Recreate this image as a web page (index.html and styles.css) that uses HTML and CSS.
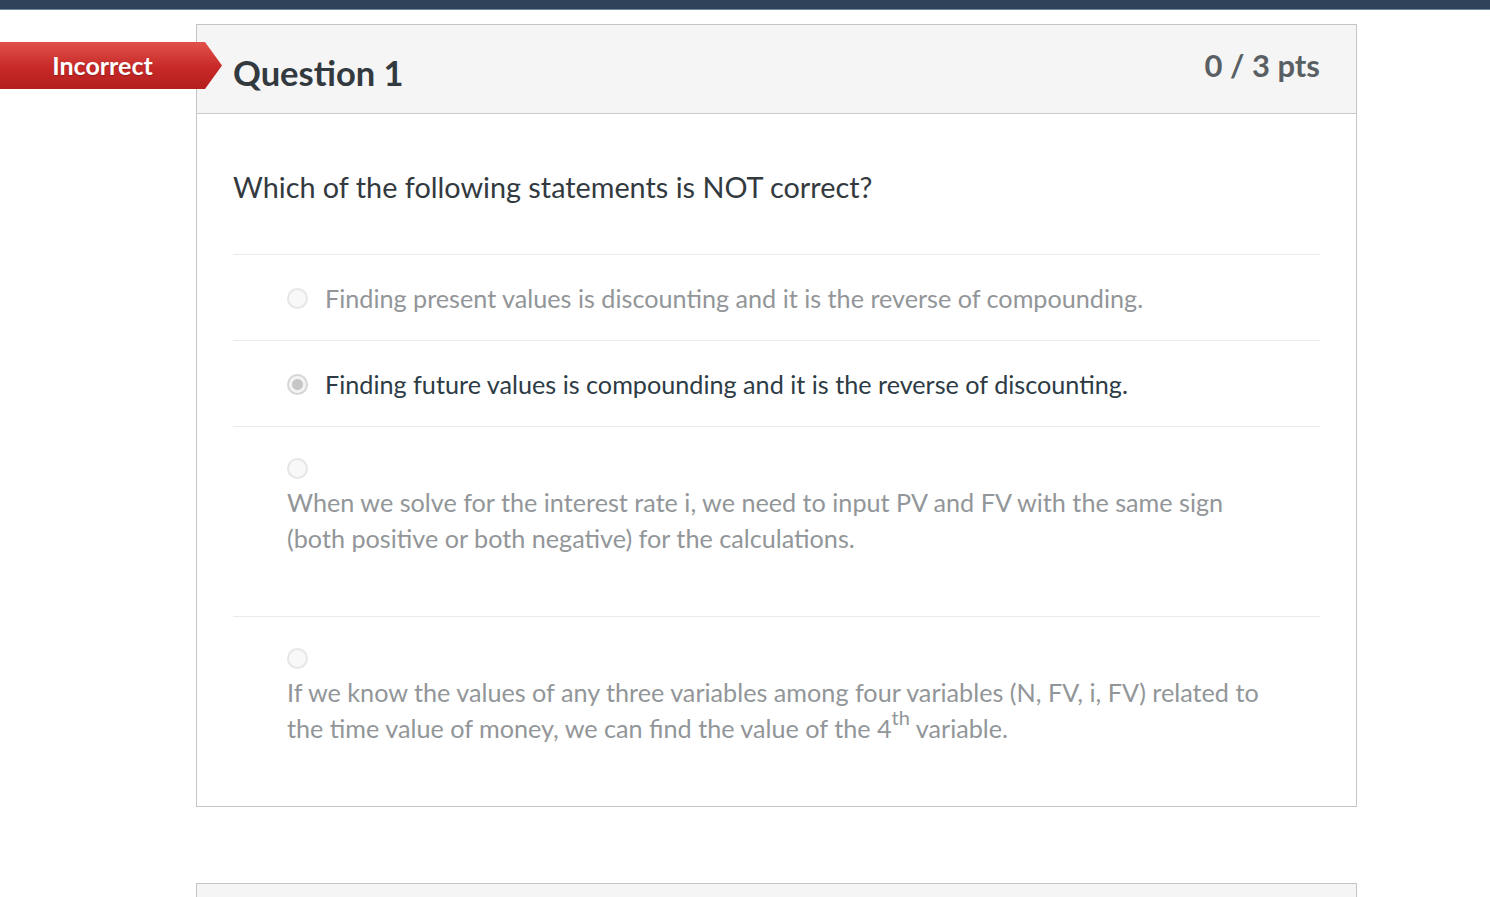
FILE: index.html
```html
<!DOCTYPE html>
<html lang="en">
<head>
<meta charset="utf-8">
<title>Question 1</title>
<link rel="stylesheet" href="styles.css">
</head>
<body>
<div class="topbar"></div>
<main class="page">
  <section class="card">
    <div class="banner"><span>Incorrect</span></div>
    <header class="card-header">
      <h2 class="q-title">Question 1</h2>
      <div class="q-points">0 / 3 pts</div>
    </header>
    <div class="card-body">
      <p class="q-text">Which of the following statements is NOT correct?</p>
      <div class="answers">
        <div class="answer inline">
          <span class="radio"></span>
          <span class="a-text">Finding present values is discounting and it is the reverse of compounding.</span>
        </div>
        <div class="answer inline selected">
          <span class="radio"></span>
          <span class="a-text">Finding future values is compounding and it is the reverse of discounting.</span>
        </div>
        <div class="answer block">
          <span class="radio"></span>
          <p class="a-text">When we solve for the interest rate i, we need to input PV and FV with the same sign (both positive or both negative) for the calculations.</p>
        </div>
        <div class="answer block">
          <span class="radio"></span>
          <p class="a-text">If we know the values of any three variables among four variables (N, FV, i, FV) related to the time value of money, we can find the value of the 4<sup>th</sup> variable.</p>
        </div>
      </div>
    </div>
  </section>
  <section class="card next">
    <header class="card-header"></header>
  </section>
</main>
</body>
</html>
```

FILE: styles.css
```css
html, body {
  margin: 0;
  padding: 0;
  background: #ffffff;
}
body {
  font-family: Lato, "Open Sans", "Liberation Sans", sans-serif;
  color: #2d3b45;
  overflow: hidden;
}
.topbar {
  height: 9px;
  background: #2f4259;
  border-bottom: 1px solid #7286a0;
}
.page {
  padding: 14px 0 0 196px;
}
.card {
  position: relative;
  width: 1159px;
  border: 1px solid #c2c6c9;
  background: #fff;
}
.card.next {
  margin-top: 76px;
}
.card-header {
  height: 89px;
  box-sizing: border-box;
  background: #f5f5f5;
  border-bottom: 1px solid #c7cbce;
  padding: 0 36px;
  display: flex;
  justify-content: space-between;
  align-items: flex-start;
}
.q-title {
  margin: 26px 0 0;
  font-size: 34.5px;
  line-height: 44px;
  font-weight: 700;
  color: #333a3f;
}
.q-points {
  margin-top: 20px;
  font-size: 31px;
  line-height: 40px;
  font-weight: 700;
  color: #595f63;
}
.banner {
  position: absolute;
  top: 17px;
  left: -197px;
  width: 222px;
  height: 47px;
  background: linear-gradient(#e2504b, #c62927 55%, #b51f1f);
  clip-path: polygon(0 0, 205px 0, 222px 23.5px, 205px 47px, 0 47px);
  display: flex;
  align-items: center;
}
.banner span {
  width: 205px;
  text-align: center;
  color: #ffffff;
  font-size: 25px;
  font-weight: 700;
  line-height: 47px;
  text-shadow: 0 1px 1px rgba(0,0,0,0.25);
}
.card-body {
  padding: 0 36px;
}
.q-text {
  margin: 0;
  padding: 52px 0 46px;
  font-size: 28.8px;
  line-height: 42px;
  color: #333a3f;
}
.answer {
  border-top: 1px solid #e8eaec;
  padding: 0 54px;
  color: #929699;
  font-size: 25.2px;
  line-height: 36px;
}
.answer.inline {
  display: flex;
  align-items: center;
  gap: 17px;
  padding-top: 25px;
  padding-bottom: 24px;
}
.answer.block {
  padding-top: 21px;
  padding-bottom: 60px;
}
.answer.block .radio {
  display: block;
  margin: 10px 0 5px;
}
.answer.selected {
  color: #2d3b45;
}
.radio {
  flex: none;
  width: 17px;
  height: 17px;
  border: 2px solid #e6e6e6;
  border-radius: 50%;
  background: #f8f8f8;
  box-sizing: content-box;
}
.selected .radio {
  border-color: #d6d6d6;
  background: radial-gradient(circle, #c6c6c6 0 5px, #f4f4f4 6px);
}
.a-text {
  margin: 0;
}
.a-text sup {
  font-size: 20px;
  line-height: 0;
  vertical-align: 13px;
}
```
